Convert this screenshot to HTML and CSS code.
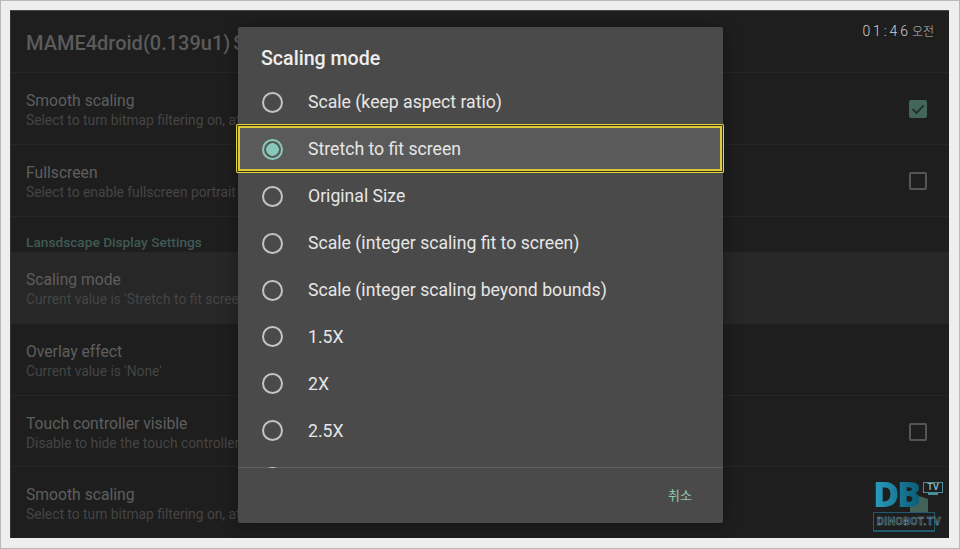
FILE: index.html
```html
<!DOCTYPE html>
<html lang="ko">
<head>
  <meta charset="UTF-8" />
  <meta name="viewport" content="width=device-width, initial-scale=1" />
  <title>Scaling mode</title>
  <link rel="stylesheet" href="styles.css">
</head>
<body>
  <div class="frame">
    <div class="screen">
      <div class="app-title">MAME4droid(0.139u1) Settings</div>
      <div class="clock"><span class="clock-time">01:46</span><span class="clock-ampm">오전</span></div>

      <div class="pref">
        <div class="pref-text">
          <div class="pref-title">Smooth scaling</div>
          <div class="pref-sub">Select to turn bitmap filtering on, at the cost of speed</div>
        </div>
        <span class="check checked">
          <svg viewBox="0 0 18 18" width="18" height="18"><path d="M3.5 9.2 7.4 13 14.6 5.4" fill="none" stroke="#1f2d29" stroke-width="1.8"/></svg>
        </span>
      </div>
      <div class="pref">
        <div class="pref-text">
          <div class="pref-title">Fullscreen</div>
          <div class="pref-sub">Select to enable fullscreen portrait mode</div>
        </div>
        <span class="check"></span>
      </div>
      <div class="category">Lansdscape Display Settings</div>
      <div class="pref active">
        <div class="pref-text">
          <div class="pref-title">Scaling mode</div>
          <div class="pref-sub">Current value is 'Stretch to fit screen'</div>
        </div>
      </div>
      <div class="pref">
        <div class="pref-text">
          <div class="pref-title">Overlay effect</div>
          <div class="pref-sub">Current value is 'None'</div>
        </div>
      </div>
      <div class="pref short">
        <div class="pref-text">
          <div class="pref-title">Touch controller visible</div>
          <div class="pref-sub">Disable to hide the touch controller on screen</div>
        </div>
        <span class="check"></span>
      </div>
      <div class="pref last">
        <div class="pref-text">
          <div class="pref-title">Smooth scaling</div>
          <div class="pref-sub">Select to turn bitmap filtering on, at the cost of speed</div>
        </div>
      </div>

      <div class="dialog" role="dialog" aria-label="Scaling mode">
        <h2 class="dialog-title">Scaling mode</h2>
        <div class="options">
          <div class="option"><span class="radio"></span>Scale (keep aspect ratio)</div>
          <div class="option selected"><span class="radio on"></span>Stretch to fit screen</div>
          <div class="option"><span class="radio"></span>Original Size</div>
          <div class="option"><span class="radio"></span>Scale (integer scaling fit to screen)</div>
          <div class="option"><span class="radio"></span>Scale (integer scaling beyond bounds)</div>
          <div class="option"><span class="radio"></span>1.5X</div>
          <div class="option"><span class="radio"></span>2X</div>
          <div class="option"><span class="radio"></span>2.5X</div>
          <div class="option"><span class="radio"></span></div>
        </div>
        <div class="dialog-actions"><span class="cancel">취소</span></div>
      </div>

      <!-- watermark -->
      <div class="logo">
        <svg class="logo-dino" viewBox="0 0 18 18" width="18" height="18"><path d="M6 0 18 4V18H0V9L6 8Z" fill="#42625a"/></svg>
        <div class="logo-top">
          <span class="logo-db">DB</span>
          <span class="logo-tv">TV</span>
        </div>
        <div class="logo-name">DINOBOT.TV</div>
      </div>
    </div>
  </div>
</body>
</html>
```

FILE: styles.css
```css
* { box-sizing: border-box; }
html, body { margin: 0; padding: 0; }
body {
  font-family: Roboto, "Noto Sans CJK KR", sans-serif;
  background: #eeeeee;
}
.frame {
  width: 960px;
  height: 549px;
  padding: 9px 10px 10px 9px;
  background: #eeeeee;
  border: 1px solid #b9b9b9;
}
.screen {
  position: relative;
  height: 100%;
  background: #1e1e1e;
  border-top: 1px solid #4a4a4a;
  border-left: 1px solid #333;
  overflow: hidden;
}
.app-title {
  height: 62px;
  padding: 20px 15px 0;
  font-size: 20px;
  line-height: 24px;
  font-weight: 500;
  word-spacing: -2px;
  color: #5b5b5b;
  border-bottom: 1px solid #262626;
}
.clock {
  position: absolute;
  top: 11px;
  right: 15px;
  display: flex;
  align-items: center;
  gap: 1px;
  line-height: 16px;
  color: #cfcfcf;
}
.clock-time {
  font-size: 14px;
  font-weight: 300;
  letter-spacing: 2.9px;
}
.clock-ampm {
  margin-top: 2px;
  font-size: 12px;
  font-weight: 300;
  color: #bdbdbd;
}
.pref {
  height: 72px;
  padding: 18px 22px 0 15px;
  display: flex;
  align-items: flex-start;
  justify-content: space-between;
  border-bottom: 1px solid #262626;
}
.pref.active { background: #272727; }
.pref.short { height: 71px; }
.pref.last { border-bottom: none; }
.pref-title {
  font-size: 15.7px;
  line-height: 20px;
  color: #5e5e5e;
}
.pref-sub {
  font-size: 13.8px;
  line-height: 18px;
  color: #454545;
}
.category {
  height: 35px;
  padding: 17px 15px 0;
  font-size: 13.7px;
  line-height: 16px;
  font-weight: 500;
  color: #3e5b53;
}
.check {
  width: 18px;
  height: 18px;
  margin-top: 9px;
  border: 2px solid #555;
  border-radius: 2px;
}
.check.checked {
  border: none;
  background: #44655a;
}
.check svg { display: block; }
.dialog {
  position: absolute;
  left: 227px;
  top: 16px;
  width: 485px;
  height: 496px;
  background: #4a4a4a;
  border-radius: 2px;
  box-shadow: 0 2px 16px rgba(0,0,0,0.35);
  display: flex;
  flex-direction: column;
}
.dialog-title {
  margin: 0;
  height: 52px;
  padding: 20px 23px 0;
  font-size: 19.6px;
  line-height: 24px;
  font-weight: 500;
  color: #eeeeee;
}
.options {
  height: 389px;
  clip-path: inset(0 -5px 0 -5px);
  border-bottom: 1px solid #5f5f5f;
}
.option {
  position: relative;
  height: 46.9px;
  padding-left: 24px;
  display: flex;
  align-items: center;
  gap: 25px;
  font-size: 17.65px;
  color: #e6e6e6;
}
.option.selected { background: #5a5a5a; }
.option.selected::after {
  content: "";
  position: absolute;
  inset: -2px -1px 0 -2px;
  border-radius: 2px;
  box-shadow: inset 0 0 0 1px #e6d23a, inset 0 0 0 2px #35331c, inset 0 0 0 4px #dccb38;
}
.radio {
  width: 21px;
  height: 21px;
  border: 2px solid #c4c4c4;
  border-radius: 50%;
  flex: none;
}
.radio.on {
  border-color: #86c9b8;
  background: radial-gradient(circle, #86c9b8 0 6px, transparent 6.5px);
}
.dialog-actions {
  flex: 1;
  display: flex;
  justify-content: flex-end;
  padding: 19px 31px 0 0;
}
.cancel {
  font-size: 13px;
  line-height: 18px;
  color: #8fc7b6;
}
.logo {
  position: absolute;
  left: 862px;
  top: 469px;
  width: 70px;
  font-weight: 700;
}
.logo-dino {
  position: absolute;
  left: 37px;
  top: 15px;
}
.logo-top {
  position: relative;
  display: flex;
  align-items: flex-start;
  justify-content: space-between;
  height: 32px;
}
.logo-db {
  font-family: "Open Sans", sans-serif;
  font-weight: 800;
  font-size: 36px;
  line-height: 28px;
  letter-spacing: -2.5px;
  background: linear-gradient(90deg, #2a9dc0, #0c5d78);
  -webkit-background-clip: text;
  background-clip: text;
  color: transparent;
}
.logo-tv {
  position: relative;
  margin-top: 2px;
  width: 20px;
  height: 11px;
  border: 1px solid #4f8c9c;
  font-size: 9px;
  line-height: 9px;
  text-align: center;
  color: #7fb2bf;
}
.logo-tv::after {
  content: "";
  position: absolute;
  left: 4px;
  right: 4px;
  top: 10px;
  height: 2px;
  background: #4f8c9c;
}
.logo-name {
  position: relative;
  width: 62px;
  height: 20px;
  border: 1px solid #215a6d;
  border-bottom-width: 2px;
  padding-left: 3px;
  font-size: 10.5px;
  line-height: 17px;
  letter-spacing: 0.4px;
  color: #1f2a2e;
  -webkit-text-stroke: 0.5px #6e9aa8;
  white-space: nowrap;
}
```
